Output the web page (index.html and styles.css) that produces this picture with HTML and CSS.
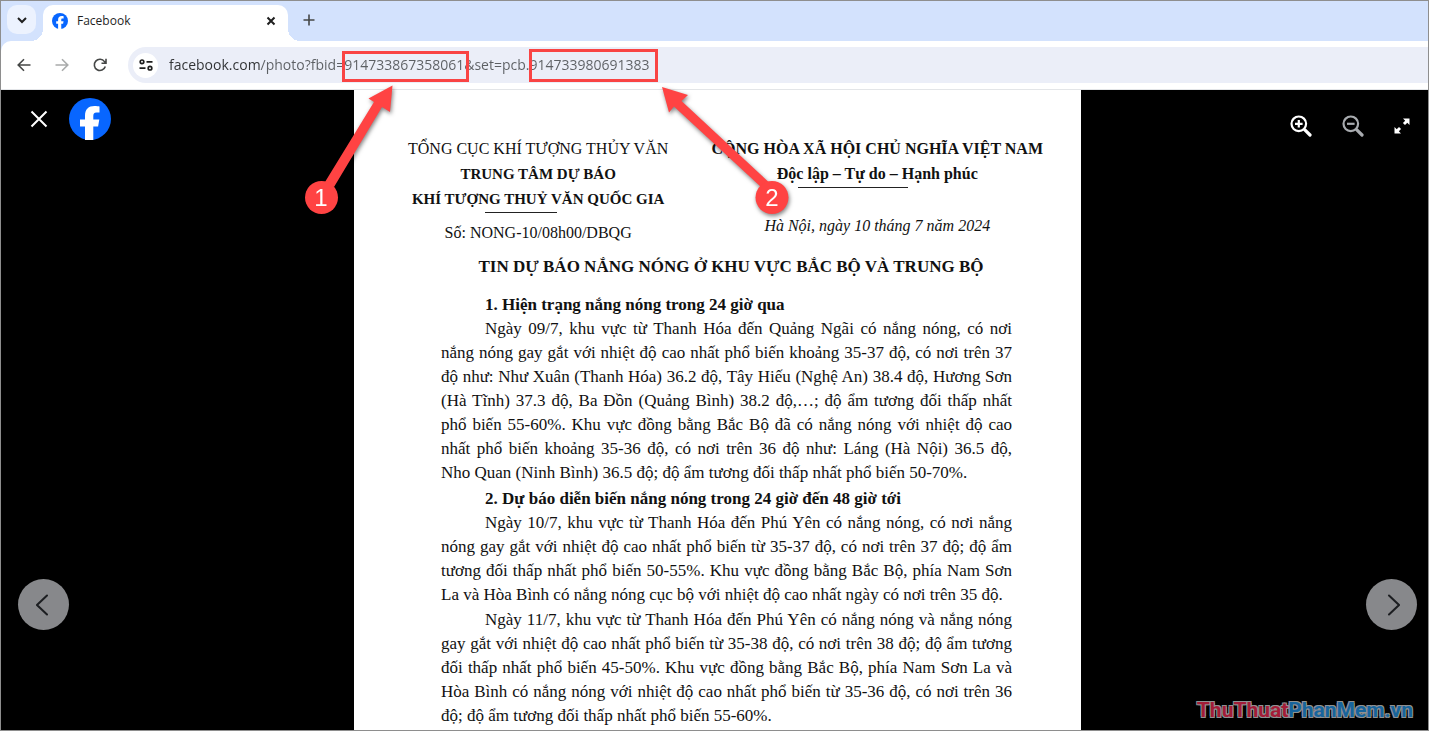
FILE: index.html
```html
<!DOCTYPE html>
<html lang="vi">
<head>
<meta charset="utf-8">
<title>Facebook</title>
<link rel="stylesheet" href="styles.css">
</head>
<body>
<div class="window">
  <div class="tabstrip">
    <button class="tab-search" aria-label="Tìm kiếm thẻ"><svg width="12" height="12" viewBox="0 0 12 12"><path class="line dark" d="M2 4l4 4 4-4"/></svg></button>
    <div class="tab">
      <svg class="favicon" width="16" height="16" viewBox="0 0 42 42"><circle cx="21" cy="21" r="21" fill="#0866ff"/><path fill="#fff" d="M16 42V28.500h-5v-7h5V18c0-7 3.500-10 9.500-10 2 0 4 .2 5 .5v6h-3c-2.500 0-3.200 1.200-3.200 3.500v3.500h6l-1.200 7h-4.800V42z"/></svg>
      <span class="tab-title">Facebook</span>
      <button class="plain tab-close" aria-label="Đóng thẻ"><svg width="10" height="10" viewBox="0 0 10 10"><path class="line dark" d="M1.500 1.500l7 7M8.500 1.500l-7 7"/></svg></button>
    </div>
    <button class="plain new-tab" aria-label="Thẻ mới"><svg width="12" height="12" viewBox="0 0 12 12"><path class="line grey" d="M6 .5v11M.5 6h11"/></svg></button>
  </div>
  <div class="toolbar">
    <button class="plain nav" aria-label="Quay lại"><svg width="14" height="14" viewBox="0 0 14 14"><path class="line grey" d="M13.500 7H1.500M7 1.200L1.200 7 7 12.800"/></svg></button>
    <button class="plain nav" aria-label="Tiến" disabled><svg width="14" height="14" viewBox="0 0 14 14"><path class="line pale" d="M.5 7h12M7 1.200L12.800 7 7 12.800"/></svg></button>
    <button class="plain nav" aria-label="Tải lại"><svg width="14" height="14" viewBox="0 0 14 14"><path class="line grey" d="M12.300 8.500A5.600 5.600 0 1 1 11.500 3.600L12.800 5M13 .8V5.300H8.500"/></svg></button>
    <div class="omnibox">
      <button class="site-info" aria-label="Thông tin trang web"><svg width="14" height="12" viewBox="0 0 14 12"><g class="line dark tune"><circle cx="3" cy="2.800" r="1.800"/><path d="M7.500 2.800h6M.5 9.200h6"/><circle cx="11" cy="9.200" r="1.800"/></g></svg></button>
      <input class="address" type="text" aria-label="Địa chỉ" value="facebook.com/photo?fbid=914733867358061&amp;set=pcb.914733980691383">
    </div>
  </div>
  <main class="viewer">
    <aside class="side side-left">
      <div class="brand">
        <button class="plain" aria-label="Đóng"><svg width="18" height="18" viewBox="0 0 18 18"><path class="line light" d="M1.500 1.500l15 15M16.500 1.500l-15 15"/></svg></button>
        <a href="#" aria-label="Facebook"><svg width="42" height="42" viewBox="0 0 42 42"><circle cx="21" cy="21" r="21" fill="#0866ff"/><path fill="#fff" d="M16 42V28.500h-5v-7h5V18c0-7 3.500-10 9.500-10 2 0 4 .2 5 .5v6h-3c-2.500 0-3.200 1.200-3.200 3.500v3.500h6l-1.200 7h-4.800V42z"/></svg></a>
      </div>
      <button class="pager" aria-label="Ảnh trước"><svg width="16" height="22" viewBox="0 0 16 22"><path class="line chev" d="M11 1.500L1 11l10 9.500"/></svg></button>
    </aside>
    <article class="photo">
      <header class="letterhead">
        <div class="org">
          <p>TỔNG CỤC KHÍ TƯỢNG THỦY VĂN</p>
          <p><b>TRUNG TÂM DỰ BÁO</b></p>
          <p><b>KHÍ TƯỢNG THUỶ VĂN QUỐC GIA</b></p>
          <hr class="rule rule-short">
          <p class="number">Số: NONG-10/08h00/DBQG</p>
        </div>
        <div class="nation">
          <p><b>CỘNG HÒA XÃ HỘI CHỦ NGHĨA VIỆT NAM</b></p>
          <p><b>Độc lập – Tự do – Hạnh phúc</b></p>
          <hr class="rule rule-long">
          <p class="date"><i>Hà Nội, ngày 10 tháng 7 năm 2024</i></p>
        </div>
      </header>
      <h1 class="title">TIN DỰ BÁO NẮNG NÓNG Ở KHU VỰC BẮC BỘ VÀ TRUNG BỘ</h1>
      <div class="text">
        <h2>1. Hiện trạng nắng nóng trong 24 giờ qua</h2>
        <p>
          <span>Ngày 09/7, khu vực từ Thanh Hóa đến Quảng Ngãi có nắng nóng, có nơi</span>
          <span>nắng nóng gay gắt với nhiệt độ cao nhất phổ biến khoảng 35-37 độ, có nơi trên 37</span>
          <span>độ như: Như Xuân (Thanh Hóa) 36.2 độ, Tây Hiếu (Nghệ An) 38.4 độ, Hương Sơn</span>
          <span>(Hà Tĩnh) 37.3 độ, Ba Đồn (Quảng Bình) 38.2 độ,…; độ ẩm tương đối thấp nhất</span>
          <span>phổ biến 55-60%. Khu vực đồng bằng Bắc Bộ đã có nắng nóng với nhiệt độ cao</span>
          <span>nhất phổ biến khoảng 35-36 độ, có nơi trên 36 độ như: Láng (Hà Nội) 36.5 độ,</span>
          <span>Nho Quan (Ninh Bình) 36.5 độ; độ ẩm tương đối thấp nhất phổ biến 50-70%.</span>
        </p>
        <h2>2. Dự báo diễn biến nắng nóng trong 24 giờ đến 48 giờ tới</h2>
        <p>
          <span>Ngày 10/7, khu vực từ Thanh Hóa đến Phú Yên có nắng nóng, có nơi nắng</span>
          <span>nóng gay gắt với nhiệt độ cao nhất phổ biến từ 35-37 độ, có nơi trên 37 độ; độ ẩm</span>
          <span>tương đối thấp nhất phổ biến 50-55%. Khu vực đồng bằng Bắc Bộ, phía Nam Sơn</span>
          <span>La và Hòa Bình có nắng nóng cục bộ với nhiệt độ cao nhất ngày có nơi trên 35 độ.</span>
        </p>
        <p>
          <span>Ngày 11/7, khu vực từ Thanh Hóa đến Phú Yên có nắng nóng và nắng nóng</span>
          <span>gay gắt với nhiệt độ cao nhất phổ biến từ 35-38 độ, có nơi trên 38 độ; độ ẩm tương</span>
          <span>đối thấp nhất phổ biến 45-50%. Khu vực đồng bằng Bắc Bộ, phía Nam Sơn La và</span>
          <span>Hòa Bình có nắng nóng với nhiệt độ cao nhất phổ biến từ 35-36 độ, có nơi trên 36</span>
          <span>độ; độ ẩm tương đối thấp nhất phổ biến 55-60%.</span>
        </p>
      </div>
    </article>
    <aside class="side side-right">
      <div class="tools">
        <button class="plain" aria-label="Phóng to"><svg width="22" height="22" viewBox="0 0 22 22"><g fill="none" stroke="#fff" stroke-width="2.200"><circle cx="8.800" cy="8.800" r="7.300"/><path d="M8.800 5v7.600M5 8.800h7.600"/><path stroke-width="3.200" stroke-linecap="round" d="M14.600 14.600l5.400 5.400"/></g></svg></button>
        <button class="plain" aria-label="Thu nhỏ"><svg width="22" height="22" viewBox="0 0 22 22"><g fill="none" stroke="#a8abaf" stroke-width="2.200"><circle cx="8.800" cy="8.800" r="7.300"/><path d="M5 8.800h7.600"/><path stroke-width="3.200" stroke-linecap="round" d="M14.600 14.600l5.400 5.400"/></g></svg></button>
        <button class="plain" aria-label="Toàn màn hình"><svg width="16" height="16" viewBox="0 0 16 16"><path fill="#fff" d="M9 .5h6.500V7L13.300 4.800 11 7.100 8.900 5l2.300-2.300zM7 15.500H.5V9l2.200 2.200L5 8.900 7.100 11l-2.300 2.300z"/></svg></button>
      </div>
      <button class="pager" aria-label="Ảnh sau"><svg width="16" height="22" viewBox="0 0 16 22"><path class="line chev" d="M5 1.500L15 11 5 20.500"/></svg></button>
    </aside>
  </main>
  <div class="mark mark-one"></div>
  <div class="mark mark-two"></div>
  <svg class="arrows" width="520" height="140" viewBox="0 0 520 140">
    <g fill="#ff4343">
      <path d="M92.500 5.500L90 32l-8-5L34 107l-9-5 49-80-5.500-3.500z"/>
      <path d="M362 7l26 8-6.500 6L474 107l-6 6.500-94-87-5 6z"/>
      <circle cx="21.500" cy="117.500" r="16.500"/>
      <circle cx="472" cy="117.500" r="16.500"/>
    </g>
    <text x="21" y="126">1</text>
    <text x="472" y="126">2</text>
  </svg>
  <div class="watermark"><span class="wm-red">ThuThuat</span><span class="wm-blue">PhanMem.vn</span></div>
</div>
</body>
</html>
```
FILE: styles.css
```css
* { box-sizing: border-box; }
body { margin: 0; font-family: "Open Sans", "Noto Sans", sans-serif; }
p, h1, h2 { margin: 0; }
svg { display: block; }

.window {
  position: relative;
  display: flex;
  flex-direction: column;
  height: 100vh;
  border: 1px solid #8e8e8e;
  overflow: hidden;
  background: #d3e2fd;
}
.plain { border: 0; padding: 0; background: none; }
.line { fill: none; stroke-width: 2; }
.dark { stroke: #1f1f1f; }
.grey { stroke: #454746; stroke-width: 1.6; }
.pale { stroke: #a9abab; stroke-width: 1.6; }
.tune { stroke-width: 1.7; }
.light { stroke: #fff; }
.chev { stroke: #1c1e21; stroke-linecap: round; }

/* Tab strip */
.tabstrip { display: flex; flex: none; height: 40px; padding: 4px 6px 0; }
.tab-search {
  display: grid;
  place-items: center;
  width: 29px;
  height: 29px;
  padding: 0;
  border: 0;
  border-radius: 10px;
  background: #ecf2fe;
}
.tab {
  position: relative;
  display: flex;
  align-items: center;
  gap: 9px;
  width: 245px;
  margin-left: 7px;
  padding: 0 12px 5px 9px;
  border-radius: 10px 10px 0 0;
  background: #fff;
}
.tab::before, .tab::after {
  content: "";
  position: absolute;
  bottom: 0;
  width: 12px;
  height: 12px;
}
.tab::before { right: 100%; background: radial-gradient(circle at 0 0, transparent 12px, #fff 12px); }
.tab::after { left: 100%; background: radial-gradient(circle at 100% 0, transparent 12px, #fff 12px); }
.tab-title { flex: 1; font-size: 12px; color: #1f1f1f; }
.new-tab { display: grid; place-items: center; width: 28px; height: 29px; margin-left: 7px; }

/* Toolbar */
.toolbar {
  display: flex;
  flex: none;
  align-items: center;
  gap: 10px;
  height: 49px;
  padding-left: 9px;
  border-bottom: 1px solid #e3e5e8;
  border-radius: 10px 0 0 0;
  background: #fff;
}
.nav { display: grid; place-items: center; width: 28px; height: 28px; }
.omnibox {
  display: flex;
  flex: 1;
  align-items: center;
  gap: 11px;
  height: 36px;
  margin-left: 4px;
  padding-left: 5px;
  border-radius: 18px 0 0 18px;
  background: #ebeef8;
}
.site-info {
  display: grid;
  place-items: center;
  width: 25px;
  height: 25px;
  padding: 0;
  border: 0;
  border-radius: 50%;
  background: #fff;
}
.address {
  flex: 1;
  padding: 0;
  border: 0;
  outline: 0;
  font: 14px/24px "Open Sans", "Noto Sans", sans-serif;
  color: transparent;
  background: linear-gradient(to right, #2f3133 91px, #5c5f63 91px);
  background-clip: text;
}

/* Photo viewer */
.viewer {
  display: grid;
  flex: 1;
  grid-template-columns: 353fr 727fr 347fr;
  min-height: 0;
  background: #000;
}
.side { display: flex; flex-direction: column; justify-content: space-between; padding-bottom: 100px; }
.brand { display: flex; align-items: center; gap: 21px; padding: 8px 0 0 29px; }
.side-left .pager { margin-left: 17px; }
.side-right { align-items: flex-end; padding-right: 11px; }
.tools { display: flex; align-items: center; gap: 30px; padding: 25px 7px 0 0; }
.pager {
  display: grid;
  place-items: center;
  width: 51px;
  height: 51px;
  padding: 0;
  border: 0;
  border-radius: 50%;
  background: #87888b;
}

/* Scanned bulletin */
.photo {
  overflow: hidden;
  padding-top: 46px;
  background: #fff;
  color: #111;
  font: 17px/24px "Liberation Serif", "Times New Roman", serif;
}
.letterhead {
  display: flex;
  justify-content: space-between;
  padding: 0 38px 0 54px;
  font-size: 16px;
  line-height: 25px;
  text-align: center;
  white-space: nowrap;
}
.org b { font-size: 15px; line-height: 1; }
.rule { height: 1px; margin: 1px 0 0; border: 0; background: #222; }
.rule-short { width: 72px; margin-left: 77px; }
.rule-long { width: 110px; margin-left: 86px; }
.number { margin-top: 7px; }
.date { margin-top: 25px; }
.title { margin-top: 10px; padding-left: 27px; font-size: 17px; line-height: 24px; text-align: center; white-space: nowrap; }
.text { margin-top: 14px; padding: 0 69px 0 87px; }
.text h2 { padding-left: 44px; font-size: 17px; line-height: 24px; }
.text p { margin-bottom: 1px; }
.text p + h2 { margin-top: 2px; }
.text span { display: block; white-space: nowrap; text-align: justify; text-align-last: justify; }
.text p span:first-child { padding-left: 44px; }
.text p span:last-child { text-align-last: left; }

/* Annotations */
.mark { position: absolute; border: 3px solid #f94444; }
.mark-one { left: 341px; top: 50px; width: 127px; height: 31px; }
.mark-two { left: 528px; top: 48px; width: 129px; height: 33px; }
.arrows { position: absolute; left: 299px; top: 79px; filter: drop-shadow(1px 2px 2px rgb(0 0 0 / 50%)); }
.arrows text { fill: #fff; font: 24px "Liberation Sans", Arial, sans-serif; text-anchor: middle; }
.watermark {
  position: absolute;
  right: 15px;
  bottom: 4px;
  font: bold 21px/32px "Liberation Sans Narrow", "Roboto", sans-serif;
  text-shadow: 1px 1px #8f9193, -1px 1px #8f9193, 1px -1px #8f9193, -1px -1px #8f9193;
}
.wm-red { position: relative; z-index: 1; color: #a31c37; }
.wm-blue { color: #17649c; }
```
